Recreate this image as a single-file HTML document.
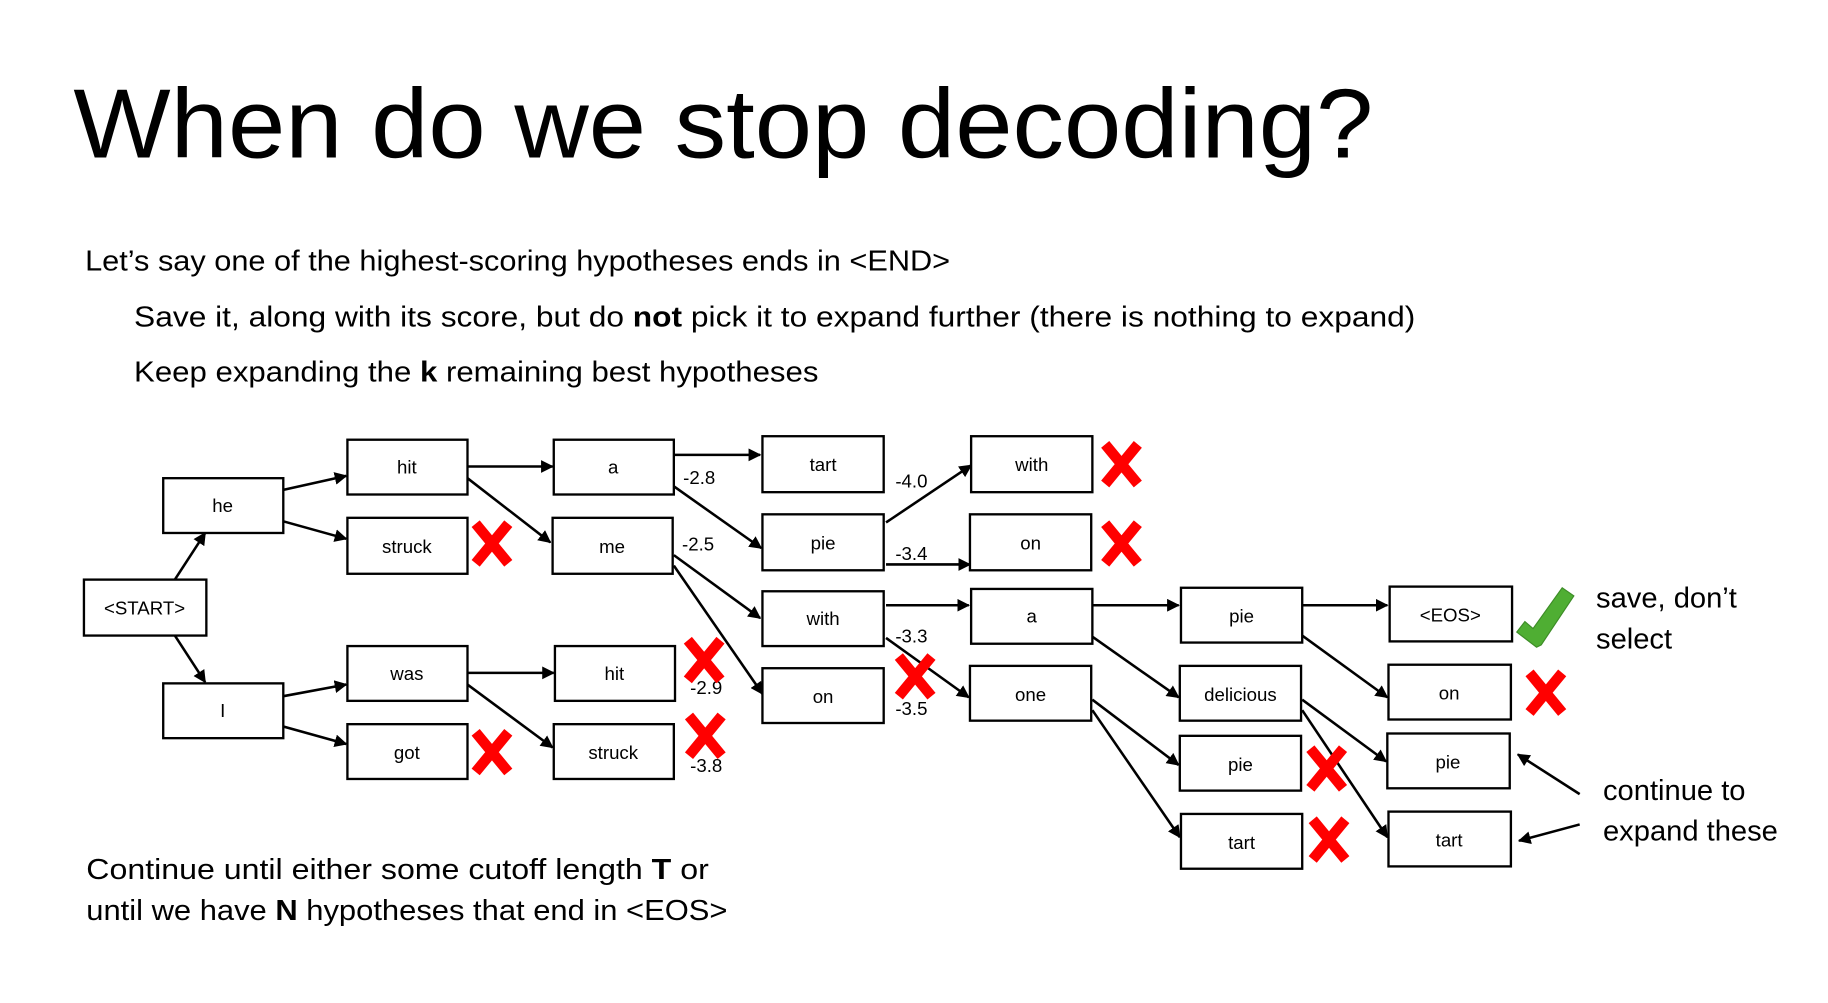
<!DOCTYPE html>
<html><head><meta charset="utf-8"><style>
html,body{margin:0;padding:0;background:#fff;}
svg{display:block;}
text{font-family:"Liberation Sans",sans-serif;fill:#000;}
</style></head><body>
<svg width="1828" height="1003" viewBox="0 0 1568 860" xmlns="http://www.w3.org/2000/svg">
<defs>
<marker id="ah" viewBox="0 0 10 10" refX="9" refY="5" markerWidth="5" markerHeight="5" orient="auto"><path d="M0,0 L10,5 L0,10 z" fill="#000"/></marker>
<g id="x"><path d="M-14,-17 L14,17 M14,-17 L-14,17" stroke="#f00" stroke-width="9"/></g>
</defs>
<rect width="1568" height="860" fill="#fff"/>
<text x="63" y="135" font-size="84" textLength="1115" lengthAdjust="spacingAndGlyphs">When do we stop decoding?</text>
<text x="73" y="232" font-size="25" textLength="742" lengthAdjust="spacingAndGlyphs">Let’s say one of the highest-scoring hypotheses ends in &lt;END&gt;</text>
<text x="115" y="280" font-size="25" textLength="1099" lengthAdjust="spacingAndGlyphs">Save it, along with its score, but do <tspan font-weight="bold">not</tspan> pick it to expand further (there is nothing to expand)</text>
<text x="115" y="327" font-size="25" textLength="587" lengthAdjust="spacingAndGlyphs">Keep expanding the <tspan font-weight="bold">k</tspan> remaining best hypotheses</text>
<text x="74" y="754" font-size="25" textLength="534" lengthAdjust="spacingAndGlyphs">Continue until either some cutoff length <tspan font-weight="bold">T</tspan> or</text>
<text x="74" y="789" font-size="25" textLength="550" lengthAdjust="spacingAndGlyphs">until we have <tspan font-weight="bold">N</tspan> hypotheses that end in &lt;EOS&gt;</text>
<text x="1369" y="521" font-size="25">save, don’t</text>
<text x="1369" y="556" font-size="25">select</text>
<text x="1375" y="686" font-size="25">continue to</text>
<text x="1375" y="721" font-size="25">expand these</text>

<g fill="none" stroke="#000" stroke-width="2">
<rect x="72" y="497" width="105" height="48"/>
<rect x="140" y="410" width="103" height="47"/>
<rect x="140" y="586" width="103" height="47"/>
<rect x="298" y="377" width="103" height="47"/>
<rect x="298" y="444" width="103" height="48"/>
<rect x="298" y="554" width="103" height="47"/>
<rect x="298" y="621" width="103" height="47"/>
<rect x="475" y="377" width="103" height="47"/>
<rect x="474" y="444" width="103" height="48"/>
<rect x="476" y="554" width="103" height="47"/>
<rect x="475" y="621" width="103" height="47"/>
<rect x="654" y="374" width="104" height="48"/>
<rect x="654" y="441" width="104" height="48"/>
<rect x="654" y="507" width="104" height="47"/>
<rect x="654" y="573" width="104" height="47"/>
<rect x="833" y="374" width="104" height="48"/>
<rect x="832" y="441" width="104" height="48"/>
<rect x="833" y="505" width="104" height="47"/>
<rect x="832" y="571" width="104" height="47"/>
<rect x="1013" y="504" width="104" height="47"/>
<rect x="1012" y="571" width="104" height="47"/>
<rect x="1012" y="631" width="104" height="47"/>
<rect x="1013" y="698" width="104" height="47"/>
<rect x="1192" y="503" width="105" height="47"/>
<rect x="1191" y="570" width="105" height="47"/>
<rect x="1190" y="629" width="105" height="47"/>
<rect x="1191" y="696" width="105" height="47"/>
</g>
<g font-size="16" text-anchor="middle">
<text x="124" y="527">&lt;START&gt;</text>
<text x="191" y="439">he</text>
<text x="191" y="615">I</text>
<text x="349" y="406">hit</text>
<text x="349" y="474">struck</text>
<text x="349" y="583">was</text>
<text x="349" y="651">got</text>
<text x="526" y="406">a</text>
<text x="525" y="474">me</text>
<text x="527" y="583">hit</text>
<text x="526" y="651">struck</text>
<text x="706" y="404">tart</text>
<text x="706" y="471">pie</text>
<text x="706" y="536">with</text>
<text x="706" y="603">on</text>
<text x="885" y="404">with</text>
<text x="884" y="471">on</text>
<text x="885" y="534">a</text>
<text x="884" y="601">one</text>
<text x="1065" y="534">pie</text>
<text x="1064" y="601">delicious</text>
<text x="1064" y="661">pie</text>
<text x="1065" y="728">tart</text>
<text x="1244" y="533">&lt;EOS&gt;</text>
<text x="1243" y="600">on</text>
<text x="1242" y="659">pie</text>
<text x="1243" y="726">tart</text>
</g>
<g font-size="16">
<text x="586" y="415">-2.8</text>
<text x="585" y="472">-2.5</text>
<text x="768" y="418">-4.0</text>
<text x="768" y="480">-3.4</text>
<text x="768" y="551">-3.3</text>
<text x="768" y="613">-3.5</text>
<text x="592" y="595">-2.9</text>
<text x="592" y="662">-3.8</text>
</g>
<g stroke="#000" stroke-width="2.2" marker-end="url(#ah)">
<line x1="150" y1="497" x2="176" y2="457"/>
<line x1="150" y1="545" x2="176" y2="585"/>
<line x1="243" y1="420" x2="297" y2="408"/>
<line x1="243" y1="447" x2="297" y2="462"/>
<line x1="243" y1="597" x2="297" y2="587"/>
<line x1="243" y1="623" x2="297" y2="638"/>
<line x1="401" y1="400" x2="474" y2="400"/>
<line x1="401" y1="410" x2="472" y2="465"/>
<line x1="401" y1="577" x2="475" y2="577"/>
<line x1="401" y1="587" x2="474" y2="641"/>
<line x1="578" y1="390" x2="652" y2="390"/>
<line x1="578" y1="417" x2="653" y2="470"/>
<line x1="578" y1="476" x2="652" y2="530"/>
<line x1="578" y1="485" x2="654" y2="595"/>
<line x1="760" y1="448" x2="833" y2="399"/>
<line x1="760" y1="484" x2="832" y2="484"/>
<line x1="760" y1="519" x2="831" y2="519"/>
<line x1="760" y1="547" x2="831" y2="598"/>
<line x1="937" y1="519" x2="1011" y2="519"/>
<line x1="937" y1="546" x2="1011" y2="598"/>
<line x1="937" y1="600" x2="1011" y2="656"/>
<line x1="937" y1="609" x2="1012" y2="718"/>
<line x1="1117" y1="519" x2="1190" y2="519"/>
<line x1="1117" y1="545" x2="1190" y2="598"/>
<line x1="1117" y1="600" x2="1189" y2="653"/>
<line x1="1117" y1="609" x2="1190" y2="718"/>
<line x1="1355" y1="681" x2="1302" y2="647"/>
<line x1="1355" y1="707" x2="1303" y2="721"/>
</g>
<use href="#x" x="422" y="466"/>
<use href="#x" x="422" y="645"/>
<use href="#x" x="604" y="566"/>
<use href="#x" x="605" y="631"/>
<use href="#x" x="962" y="398"/>
<use href="#x" x="962" y="466"/>
<use href="#x" x="785" y="580"/>
<use href="#x" x="1138" y="659"/>
<use href="#x" x="1140" y="720"/>
<use href="#x" x="1326" y="594"/>
<polygon points="1301,542 1308,533 1315,539 1340,504 1350,511 1322,553 1318,555" fill="#4fae33" stroke="#3d8c27" stroke-width="1"/>
</svg>
</body></html>
